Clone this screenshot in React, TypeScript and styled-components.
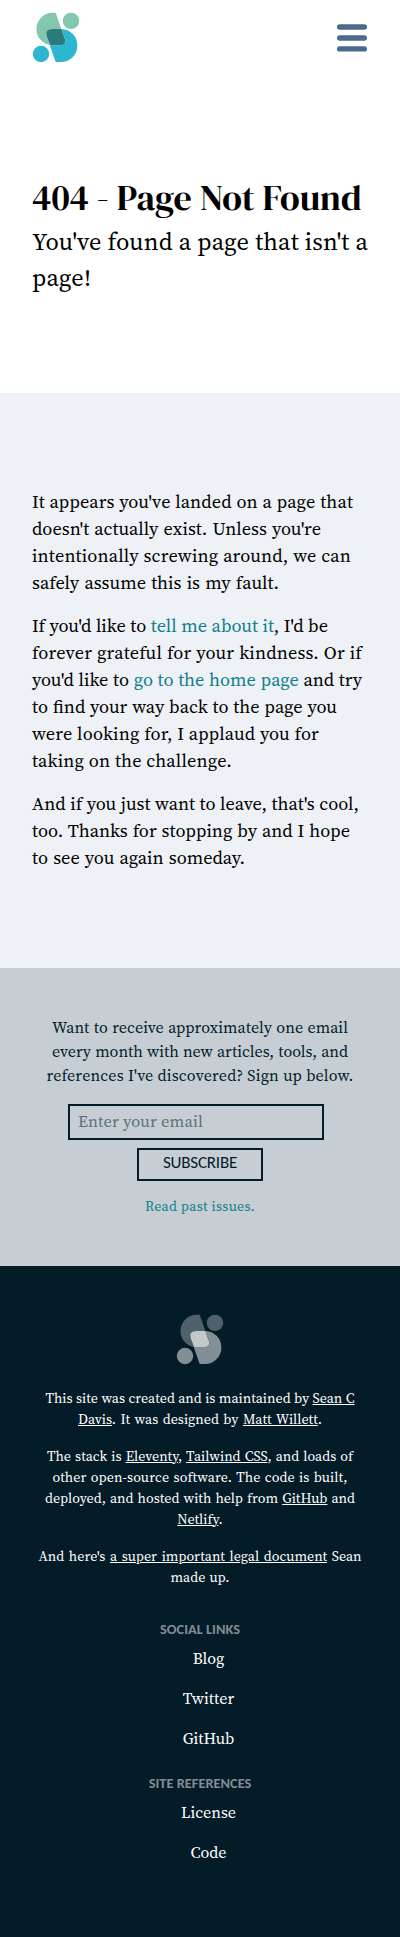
import React from 'react';
import styled, { createGlobalStyle } from 'styled-components';

const serif = '"Source Serif 4", "Noto Serif", "Liberation Serif", serif';
const sans = 'Carlito, Lato, "Liberation Sans", sans-serif';
const ink = '#041b28';
const teal = '#0f7f8b';

const GlobalStyle = createGlobalStyle`
  *, *::before, *::after { box-sizing: border-box; }
  body { margin: 0; background: #fff; color: #000; font-family: ${serif}; }
  h1, h2, p, ul { margin: 0; padding: 0; font-weight: 400; }
  ul { list-style: none; }
`;

const Header = styled.header`
  display: flex;
  justify-content: space-between;
  align-items: flex-start;
  height: 76px;
  padding: 12px 32px 0;
`;

const MenuButton = styled.button`
  display: flex;
  margin: 12px 1px 0 0;
  padding: 0;
  border: 0;
  background: none;
`;

const Hero = styled.section`
  height: 317px;
  padding: 99px 24px 0 32px;
`;

const Title = styled.h1`
  font-family: 'DM Serif Display', ${serif};
  font-size: 36px;
  line-height: 45px;
  letter-spacing: 0.03px;
  white-space: nowrap;
`;

const Subtitle = styled.p`
  margin-top: 4px;
  font-size: 24.4px;
  line-height: 36px;
  letter-spacing: 0.17px;
`;

/* One set line of copy, spread to a fixed measure. */
const Line = styled.span<{ $w: number; $track?: number }>`
  display: block;
  width: ${(p) => p.$w}px;
  text-align: justify;
  text-align-last: justify;
  ${(p) => p.$track !== undefined && `letter-spacing: ${p.$track}px;`}
`;

const Copy = styled.section`
  display: flex;
  flex-direction: column;
  gap: 16px;
  height: 575px;
  padding: 95px 24px 97px 32px;
  background: #eef1f6;
`;

const CopyText = styled.p`
  font-size: 18.3px;
  line-height: 27px;
  font-feature-settings: 'liga' 1;
`;

const TextLink = styled.a`
  color: ${teal};
  text-decoration: none;
`;

const Newsletter = styled.section`
  display: flex;
  flex-direction: column;
  align-items: center;
  height: 298px;
  padding-top: 47px;
  background: #c6ced4;
  color: ${ink};
`;

const Pitch = styled.p`
  display: flex;
  flex-direction: column;
  align-items: center;
  font-size: 16px;
  line-height: 24px;
`;

const EmailInput = styled.input`
  width: 256px;
  height: 36px;
  margin: 17px 8px 0 0;
  padding: 0 8px 2px;
  border: 2px solid ${ink};
  border-radius: 0;
  background: transparent;
  font-family: ${serif};
  font-size: 16.4px;
  letter-spacing: 0.15px;
  &::placeholder { color: #5f7079; opacity: 1; }
`;

const SubscribeButton = styled.button`
  width: 126px;
  height: 33px;
  margin-top: 8px;
  padding: 0 0 4px;
  border: 2px solid ${ink};
  background: transparent;
  color: ${ink};
  font-family: ${sans};
  font-size: 17px;
  letter-spacing: -0.2px;
  text-transform: uppercase;
`;

const PastIssues = styled(TextLink)`
  margin-top: 15px;
  font-size: 14px;
  line-height: 21px;
  letter-spacing: 0.3px;
`;

const Footer = styled.footer`
  display: flex;
  flex-direction: column;
  align-items: center;
  height: 671px;
  padding-top: 48px;
  background: ${ink};
  color: #fff;
`;

const Credits = styled.div`
  display: flex;
  flex-direction: column;
  gap: 16px;
  margin-top: 23px;
  font-size: 14px;
  line-height: 21px;
`;

const Credit = styled.p`
  display: flex;
  flex-direction: column;
  align-items: center;
`;

const FooterLink = styled.a`
  color: inherit;
  text-decoration: underline;
`;

const LinkHeading = styled.h2<{ $top: number }>`
  margin-top: ${(p) => p.$top}px;
  color: #828d94;
  font-family: ${sans};
  font-size: 14.4px;
  font-weight: 700;
  line-height: 21px;
  text-transform: uppercase;
`;

const LinkList = styled.ul`
  padding: 6px 0 0 17px;
  text-align: center;
`;

const LinkItem = styled.li`
  height: 40px;
  font-size: 16px;
  line-height: 24px;
`;

type LogoProps = { upper: string; lower: string; overlap: string };

function Logo({ upper, lower, overlap }: LogoProps) {
  return (
    <svg width="48" height="51" viewBox="32 12 48 51" aria-label="Sean C Davis">
      <circle cx="71" cy="20.9" r="8.2" fill={upper} />
      <circle cx="41" cy="54" r="8.2" fill={lower} />
      <path
        d="M55.7 12.7H51.5A16.35 16.35 0 0 0 51.5 45.3L49.8 45.2 46.6 36Q44.6 29.1 52 29H61.3Z"
        fill={upper}
      />
      <path d="M61.3 29A16.5 16.5 0 0 1 60.5 62H55.7L49.8 45.3H60Q66.5 44.8 65.2 39.5Z" fill={lower} />
      <path
        d="M52 29H61.3L65 39.2Q66.6 44.9 60 45.3H50L46.6 36Q44.6 29.2 52 29Z"
        fill={overlap}
      />
    </svg>
  );
}

function MenuIcon() {
  return (
    <svg width="30" height="28" viewBox="0 0 30 28" stroke="#4a6b8d" strokeWidth="5.4" strokeLinecap="round">
      <path d="M2.7 3H27.3M2.7 14H27.3M2.7 24.9H27.3" />
    </svg>
  );
}

export default function App() {
  return (
    <>
      <GlobalStyle />
      <Header>
        <Logo upper="#83c7af" lower="#2cb6cf" overlap="#2b7b7d" />
        <MenuButton aria-label="Menu">
          <MenuIcon />
        </MenuButton>
      </Header>
      <Hero>
        <Title>404 - Page Not Found</Title>
        <Subtitle>
          <Line $w={336}>You've found a page that isn't a</Line>
          page!
        </Subtitle>
      </Hero>
      <Copy>
        <CopyText>
          <Line $w={321} $track={0.17}>It appears you've landed on a page that</Line>
          <Line $w={289}>doesn't actually exist. Unless you're</Line>
          <Line $w={319} $track={0.17}>intentionally screwing around, we can</Line>
          <Line $w={247}>safely assume this is my fault.</Line>
        </CopyText>
        <CopyText>
          <Line $w={296}>
            If you'd like to <TextLink>tell me about it</TextLink>, I'd be
          </Line>
          <Line $w={330} $track={0.17}>forever grateful for your kindness. Or if</Line>
          <Line $w={330}>
            you'd like to <TextLink>go to the home page</TextLink> and try
          </Line>
          <Line $w={305}>to find your way back to the page you</Line>
          <Line $w={287} $track={0.17}>were looking for, I applaud you for</Line>
          <Line $w={200} $track={0.17}>taking on the challenge.</Line>
        </CopyText>
        <CopyText>
          <Line $w={327}>And if you just want to leave, that's cool,</Line>
          <Line $w={318}>too. Thanks for stopping by and I hope</Line>
          <Line $w={213}>to see you again someday.</Line>
        </CopyText>
      </Copy>
      <Newsletter>
        <Pitch>
          <Line $w={296} $track={0.05}>Want to receive approximately one email</Line>
          <Line $w={296}>every month with new articles, tools, and</Line>
          <Line $w={307} $track={0.17}>references I've discovered? Sign up below.</Line>
        </Pitch>
        <EmailInput placeholder="Enter your email" />
        <SubscribeButton>Subscribe</SubscribeButton>
        <PastIssues>Read past issues.</PastIssues>
      </Newsletter>
      <Footer>
        <Logo upper="#51616a" lower="#838f96" overlap="#c1c7cb" />
        <Credits>
          <Credit>
            <Line $w={309}>
              This site was created and is maintained by <FooterLink>Sean C</FooterLink>
            </Line>
            <Line $w={244}>
              <FooterLink>Davis</FooterLink>. It was designed by <FooterLink>Matt Willett</FooterLink>.
            </Line>
          </Credit>
          <Credit>
            <Line $w={306}>
              The stack is <FooterLink>Eleventy</FooterLink>, <FooterLink>Tailwind CSS</FooterLink>, and loads of
            </Line>
            <Line $w={295} $track={0.1}>other open-source software. The code is built,</Line>
            <Line $w={310}>
              deployed, and hosted with help from <FooterLink>GitHub</FooterLink> and
            </Line>
            <span>
              <FooterLink>Netlify</FooterLink>.
            </span>
          </Credit>
          <Credit>
            <Line $w={323}>
              And here's <FooterLink>a super important legal document</FooterLink> Sean
            </Line>
            <Line $w={59}>made up.</Line>
          </Credit>
        </Credits>
        <LinkHeading $top={31}>Social Links</LinkHeading>
        <LinkList>
          <LinkItem>Blog</LinkItem>
          <LinkItem>Twitter</LinkItem>
          <LinkItem>GitHub</LinkItem>
        </LinkList>
        <LinkHeading $top={7}>Site References</LinkHeading>
        <LinkList>
          <LinkItem>License</LinkItem>
          <LinkItem>Code</LinkItem>
        </LinkList>
      </Footer>
    </>
  );
}
